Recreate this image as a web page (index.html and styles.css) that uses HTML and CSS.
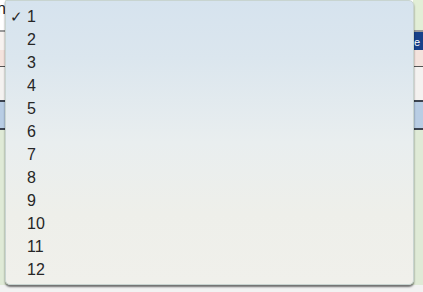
FILE: index.html
```html
<!DOCTYPE html>
<html lang="en">
<head>
    <meta charset="UTF-8">
    <title>Select</title>
    <link rel="stylesheet" href="styles.css">
</head>
<body>
    <div class="page">
        <div class="row row-top">
            <div class="cell-left"><span class="label">n</span></div>
            <div class="cell-right green"></div>
        </div>
        <div class="row row-nav">
            <div class="cell-left white"></div>
            <div class="cell-right navy"><span class="nav-glyph">e</span></div>
        </div>
        <div class="row row-pink">
            <div class="cell-left pink"></div>
            <div class="cell-right pink"></div>
        </div>
        <div class="row row-light"></div>
        <div class="row row-blue"></div>
        <div class="row row-green"></div>
        <div class="row row-foot"></div>
    </div>

    <!-- popup menu -->
    <ul class="menu">
        <li class="checked">1</li>
        <li>2</li>
        <li>3</li>
        <li>4</li>
        <li>5</li>
        <li>6</li>
        <li>7</li>
        <li>8</li>
        <li>9</li>
        <li>10</li>
        <li>11</li>
        <li>12</li>
    </ul>
</body>
</html>
```

FILE: styles.css
```css
* {
    box-sizing: border-box;
    margin: 0;
    padding: 0;
}

body {
    width: 423px;
    height: 292px;
    overflow: hidden;
    position: relative;
    background-color: #ffffff;
    font-family: "Liberation Sans", Helvetica, Arial, sans-serif;
}

.page {
    display: flex;
    flex-direction: column;
    height: 100%;
}

.row {
    display: flex;
    justify-content: space-between;
}

.cell-left,
.cell-right {
    width: 10px;
}

.row-top {
    height: 30px;
}

.label {
    display: block;
    font-size: 16px;
    color: #222;
    line-height: 18px;
    margin-left: -3px;
}

.green {
    background-color: #e2eed6;
}

.row-nav {
    height: 20px;
    border-top: 2px solid #9a9a9a;
}

.white {
    background-color: #f7f2ef;
}

.navy {
    background-color: #17408a;
    color: #ffffff;
    font-size: 11px;
    line-height: 20px;
    padding-left: 1px;
}

.row-pink {
    height: 17px;
    border-bottom: 1px solid #555;
}

.pink {
    background-color: #f4e3dd;
}

.row-light {
    height: 33px;
    background-color: #f4f2f0;
}

.row-blue {
    height: 30px;
    background-color: #b8cde4;
    border-top: 2px solid #3c4450;
    border-bottom: 2px solid #3c4450;
}

.row-green {
    flex-grow: 1;
    background-color: #dfead6;
}

.row-foot {
    height: 7px;
    background-color: #f2f2f2;
}

/* dropdown */
.menu {
    position: absolute;
    top: 0;
    left: 5px;
    width: 409px;
    height: 285px;
    list-style: none;
    padding-top: 4px;
    background: linear-gradient(to bottom, #d6e3ee 0%, #dbe6ee 20%, #e9eeef 50%, #eeefea 75%, #f0f0eb 100%);
    border: 1px solid #c8d4d0;
    border-radius: 0 5px 5px 5px;
    box-shadow: 0 2px 2px rgba(0, 0, 0, 0.55);
}

.menu li {
    position: relative;
    height: 23px;
    line-height: 23px;
    padding-left: 21px;
    font-size: 16px;
    color: #262626;
}

.menu li.checked::before {
    content: "\2713";
    position: absolute;
    left: 4px;
    font-size: 15px;
    color: #262626;
}
```
